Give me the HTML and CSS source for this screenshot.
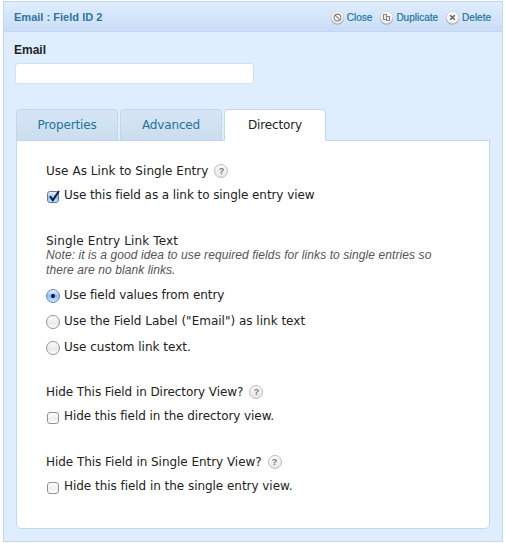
FILE: index.html
```html
<!DOCTYPE html>
<html lang="en">
<head>
<meta charset="utf-8">
<title>Email field settings</title>
<link rel="stylesheet" href="styles.css">
</head>
<body>
<main class="field">
  <header class="field-header">
    <h1 class="field-title">Email : Field ID 2</h1>
    <nav class="actions">
      <a class="action close"><svg class="icon" viewBox="0 0 15 15"><circle class="shade" cx="7.5" cy="8" r="6.7"/><circle class="disc" cx="7.5" cy="7.2" r="6.2"/><g class="line"><circle cx="7.5" cy="7.5" r="3.4"/><path d="M5.1 5.1l4.8 4.8"/></g></svg><span>Close</span></a>
      <a class="action duplicate"><svg class="icon" viewBox="0 0 15 15"><circle class="shade" cx="7.5" cy="8" r="6.7"/><circle class="disc" cx="7.5" cy="7.2" r="6.2"/><path class="line" d="M4.5 4.5h3v5h-3zM7.5 6.5h3v4h-3z"/></svg><span>Duplicate</span></a>
      <a class="action delete"><svg class="icon" viewBox="0 0 15 15"><circle class="shade" cx="7.5" cy="8" r="6.7"/><circle class="disc" cx="7.5" cy="7.2" r="6.2"/><path class="line cross" d="M5.2 5.2l4.6 4.6M9.8 5.2l-4.6 4.6"/></svg><span>Delete</span></a>
    </nav>
  </header>
  <div class="preview">
    <label class="preview-label" for="email">Email</label>
    <input class="preview-input" id="email" type="text">
  </div>
  <div class="tabs">
    <div class="tab">Properties</div>
    <div class="tab">Advanced</div>
    <div class="tab active">Directory</div>
  </div>
  <section class="panel">
    <div class="group link-group">
      <div class="heading"><span class="wide">Use As Link to Single Entry</span><i class="help">?</i></div>
      <label class="option"><span class="check checked"><svg class="tick" viewBox="0 0 14 14"><path d="M3 7.3l2.8 4L12 2"/></svg></span><span class="tight">Use this field as a link to single entry view</span></label>
    </div>
    <div class="group text-group">
      <div class="heading"><span class="wider">Single Entry Link Text</span></div>
      <p class="note">Note: it is a good idea to use required fields for links to single entries so<br>there are no blank links.</p>
      <label class="option"><span class="radio selected"></span><span class="tight">Use field values from entry</span></label>
      <label class="option"><span class="radio"></span><span>Use the Field Label ("Email") as link text</span></label>
      <label class="option"><span class="radio"></span><span>Use custom link text.</span></label>
    </div>
    <div class="group hide-group">
      <div class="heading"><span class="tight">Hide This Field in Directory View?</span><i class="help">?</i></div>
      <label class="option"><span class="check"></span><span class="tight">Hide this field in the directory view.</span></label>
    </div>
    <div class="group hide-group">
      <div class="heading"><span class="snug">Hide This Field in Single Entry View?</span><i class="help">?</i></div>
      <label class="option"><span class="check"></span><span class="snug">Hide this field in the single entry view.</span></label>
    </div>
  </section>
</main>
</body>
</html>
```
FILE: styles.css
```css
* { box-sizing: border-box; }
body { margin: 0; background: #fff; color: #222; font: 12px/18px "DejaVu Sans", sans-serif; }
.field { width: 500px; height: 541px; margin: 1px 0 0 3px; border: 1px solid #c2d7ef; background: #dfeeff; }
.field-header { display: flex; justify-content: space-between; height: 30px; padding: 0 11px 0 10px; border-bottom: 1px solid #c2d7ef; background: linear-gradient(#dfeeff, #cadcf6); font-family: "Liberation Sans", sans-serif; }
.field-title { margin: 6px 0 0; color: #31759b; font-size: 11px; line-height: 18px; letter-spacing: .02px; }
.actions { display: flex; gap: 7px; padding-top: 7px; color: #21759b; font-size: 10px; -webkit-text-stroke: .2px #21759b; }
.action { display: flex; gap: 2px; height: 18px; }
.icon { width: 15px; height: 15px; margin-top: 1px; }
.shade { fill: #a9adb3; }
.disc { fill: #f5f5f5; stroke: #d0d0d0; stroke-width: .6; }
.line { fill: none; stroke: #858585; stroke-width: 1.1; }
.cross { stroke: #666; stroke-width: 1.6; }
.preview { height: 76px; padding: 9px 10px 0; }
.preview-label { display: block; height: 22px; color: #222; font: bold 12px/18px "Liberation Sans", sans-serif; }
.preview-input { display: block; width: 239px; height: 21px; margin-left: 1px; border: 1px solid #d3e0ef; border-radius: 3px; background: #fff; }
.tabs { display: flex; gap: 2px; height: 32px; margin: 1px 0 0 12px; position: relative; z-index: 1; }
.tab { width: 102px; height: 32px; padding-top: 6px; border: 1px solid #c2d7ef; border-radius: 4px 4px 0 0; background: linear-gradient(#d5e5f5, #cbddee); color: #21759b; letter-spacing: -.15px; text-align: center; }
.tab.active { border-bottom-color: #fff; background: #fff; color: #222; }
.panel { width: 474px; height: 389px; margin: -1px 0 0 12px; padding: 20px 29px 0; border: 1px solid #c2d7ef; border-radius: 0 0 5px 5px; background: #fff; }
.link-group { height: 70px; }
.text-group { height: 151px; }
.hide-group { height: 70px; }
.heading { display: flex; gap: 6px; height: 20px; padding-top: 1px; }
.wide { letter-spacing: .04px; }
.wider { letter-spacing: .14px; }
.tight { letter-spacing: -.07px; }
.snug { letter-spacing: -.04px; }
.help { width: 14px; height: 14px; margin-top: 2px; border: 1px solid #bbb; border-radius: 50%; background: linear-gradient(#fafafa, #e8e8e8); color: #777; font: bold 9px/12px "Liberation Sans", sans-serif; text-align: center; }
.option { display: flex; gap: 4px; height: 26px; padding-top: 5px; }
.check { width: 12px; height: 12px; margin: 5px 1px 0; border: 1px solid #929292; border-radius: 3px; background: linear-gradient(#fff, #eee 60%, #fff); }
.checked { border-color: #6078a9; background: linear-gradient(#eaf4ff, #8fbce9 55%, #c0e6ff); }
.tick { display: block; width: 14px; height: 14px; margin: -3px 0 0 -1px; fill: none; stroke: #111d36; stroke-width: 2; overflow: visible; }
.radio { width: 14px; height: 14px; margin-top: 3px; border: 1px solid #929292; border-radius: 50%; background: linear-gradient(#fff, #e9e9e9 60%, #fff); }
.radio.selected { border-color: #6685b8; background: radial-gradient(circle, #10213b 0 1.7px, transparent 2.4px), linear-gradient(#eaf4ff, #91bdef 50%, #c5eaff); }
.note { height: 33px; margin: -3px 0 0; color: #555; font: italic 12px/15px "Liberation Sans", sans-serif; letter-spacing: .085px; white-space: nowrap; }
```
